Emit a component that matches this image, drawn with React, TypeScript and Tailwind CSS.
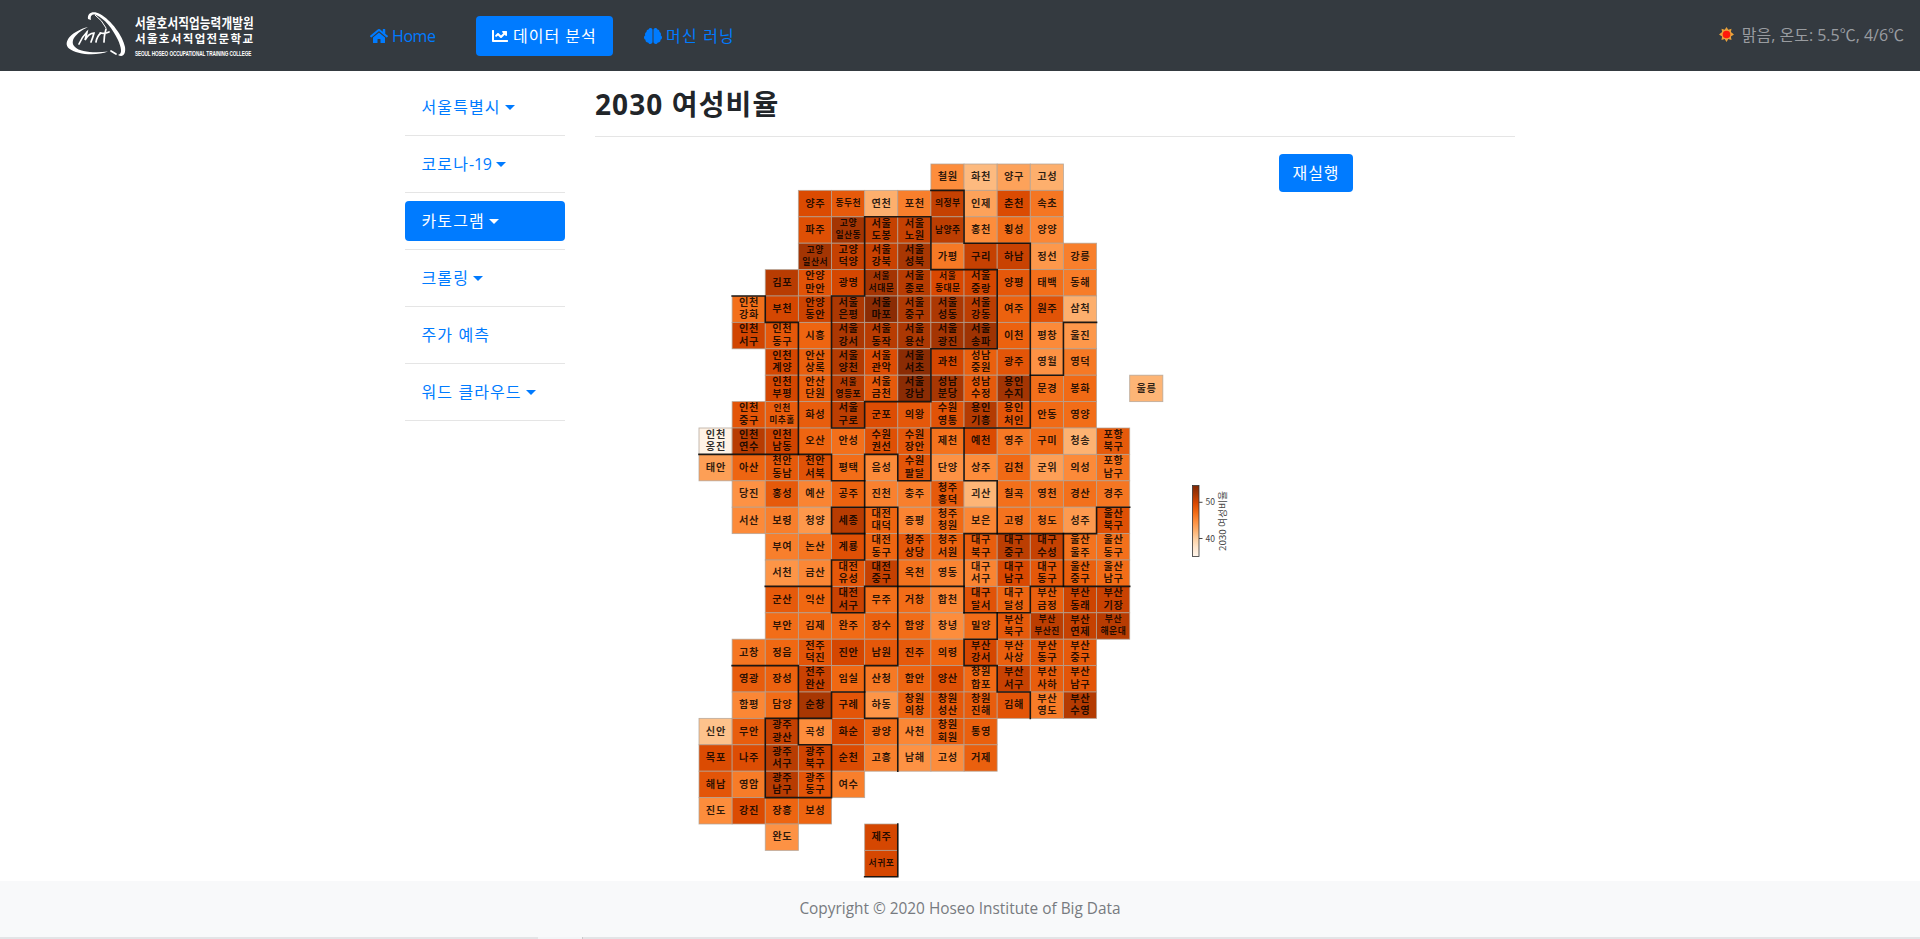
import React from "react";
import { FaHome, FaChartLine, FaBrain } from "react-icons/fa";

const CELL_W = 33.13;
const CELL_H = 26.4;

type Row = { y: number; x: number; cells: string };

// Each cell is "name:level"; a slash splits the name over two lines, "-" leaves a gap.
const ROWS: Row[] = [
  { y: 0, x: 7, cells: "철원:50 화천:33 양구:42 고성:37" },
  { y: 1, x: 3, cells: "양주:74 동두천:68 연천:37 포천:55 의정부:80 인제:42 춘천:74 속초:58" },
  { y: 2, x: 3, cells: "파주:72 고양/일산동:88 서울/도봉:80 서울/노원:80 남양주:82 홍천:50 횡성:61 양양:52" },
  { y: 3, x: 3, cells: "고양/일산서:88 고양/덕양:80 서울/강북:79 서울/성북:87 가평:57 구리:80 하남:79 정선:46 강릉:55" },
  { y: 4, x: 2, cells: "김포:83 안양/만안:71 광명:76 서울/서대문:88 서울/종로:83 서울/동대문:75 서울/중랑:76 양평:69 태백:60 동해:56" },
  { y: 5, x: 1, cells: "인천/강화:60 부천:76 안양/동안:78 서울/은평:86 서울/마포:96 서울/중구:85 서울/성동:86 서울/강동:82 여주:65 원주:71 삼척:37" },
  { y: 6, x: 1, cells: "인천/서구:77 인천/동구:69 시흥:64 서울/강서:86 서울/동작:83 서울/용산:86 서울/광진:88 서울/송파:90 이천:65 평창:51 울진:46" },
  { y: 7, x: 2, cells: "인천/계양:76 안산/상록:66 서울/양천:84 서울/관악:73 서울/서초:96 과천:76 성남/중원:66 광주:70 영월:48 영덕:57" },
  { y: 8, x: 2, cells: "인천/부평:76 안산/단원:66 서울/영등포:83 서울/금천:68 서울/강남:96 성남/분당:87 성남/수정:68 용인/수지:88 문경:60 봉화:62 - 울릉:35" },
  { y: 9, x: 1, cells: "인천/중구:70 인천/미추홀:67 화성:67 서울/구로:82 군포:73 의왕:69 수원/영통:71 용인/기흥:84 용인/처인:70 안동:62 영양:61" },
  { y: 10, x: 0, cells: "인천/옹진:2 인천/연수:83 인천/남동:77 오산:64 안성:60 수원/권선:72 수원/장안:69 제천:59 예천:74 영주:57 구미:62 청송:36 포항/북구:68" },
  { y: 11, x: 0, cells: "태안:43 아산:64 천안/동남:68 천안/서북:71 평택:61 음성:51 수원/팔달:70 단양:48 상주:50 김천:62 군위:43 의성:51 포항/남구:59" },
  { y: 12, x: 1, cells: "당진:48 홍성:68 예산:53 공주:65 진천:54 충주:55 청주/흥덕:68 괴산:35 칠곡:60 영천:57 경산:60 경주:58" },
  { y: 13, x: 1, cells: "서산:51 보령:55 청양:46 세종:83 대전/대덕:64 증평:53 청주/청원:62 보은:52 고령:59 청도:57 성주:45 울산/북구:72" },
  { y: 14, x: 2, cells: "부여:55 논산:58 계룡:72 대전/동구:64 청주/상당:69 청주/서원:65 대구/북구:67 대구/중구:82 대구/수성:80 울산/울주:59 울산/동구:60" },
  { y: 15, x: 2, cells: "서천:47 금산:52 대전/유성:69 대전/중구:80 옥천:59 영동:53 대구/서구:53 대구/남구:75 대구/동구:69 울산/중구:66 울산/남구:61" },
  { y: 16, x: 2, cells: "군산:68 익산:63 대전/서구:79 무주:60 거창:61 합천:52 대구/달서:71 대구/달성:64 부산/금정:66 부산/동래:78 부산/기장:79" },
  { y: 17, x: 2, cells: "부안:61 김제:61 완주:62 장수:65 함양:61 창녕:50 밀양:61 부산/북구:68 부산/부산진:82 부산/연제:80 부산/해운대:83" },
  { y: 18, x: 1, cells: "고창:58 정읍:63 전주/덕진:70 진안:76 남원:69 진주:68 의령:63 부산/강서:76 부산/사상:66 부산/동구:68 부산/중구:68" },
  { y: 19, x: 1, cells: "영광:67 장성:65 전주/완산:79 임실:63 산청:57 함안:64 양산:72 창원/합포:62 부산/서구:79 부산/사하:67 부산/남구:70" },
  { y: 20, x: 1, cells: "함평:52 담양:61 순창:87 구례:70 하동:47 창원/의창:64 창원/성산:68 창원/진해:67 김해:70 부산/영도:56 부산/수영:84" },
  { y: 21, x: 0, cells: "신안:30 무안:67 광주/광산:80 곡성:50 화순:75 광양:61 사천:52 창원/회원:67 통영:66" },
  { y: 22, x: 0, cells: "목포:74 나주:73 광주/서구:83 광주/북구:77 순천:74 고흥:55 남해:48 고성:50 거제:66" },
  { y: 23, x: 0, cells: "해남:70 영암:56 광주/남구:83 광주/동구:70 여수:55" },
  { y: 24, x: 0, cells: "진도:50 강진:74 장흥:64 보성:64" },
  { y: 25, x: 2, cells: "완도:48 - - 제주:76" },
  { y: 26, x: 5, cells: "서귀포:76" },
];

// Province boundaries as polylines in cell coordinates.
const BORDERS: number[][][] = [
  [[1, 5], [2, 5], [2, 6], [3, 6], [3, 11]],
  [[0, 11], [4, 11], [4, 12], [5, 12]],
  [[5, 2], [7, 2], [7, 4], [9, 4], [9, 7], [7, 7], [7, 9], [5, 9], [5, 10], [4, 10], [4, 5], [5, 5], [5, 2]],
  [[7, 1], [8, 1], [8, 3], [10, 3], [10, 10], [7, 10], [7, 12], [6, 12], [6, 11], [5, 11], [5, 15], [4, 15], [4, 17], [5, 17], [5, 16], [8, 16]],
  [[10, 8], [11, 8], [11, 6], [12, 6]],
  [[8, 10], [8, 12], [9, 12], [9, 14]],
  [[8, 17], [8, 14], [12, 14], [12, 13], [13, 13]],
  [[11, 14], [11, 16]],
  [[8, 17], [10, 17], [10, 16], [13, 16]],
  [[9, 17], [9, 18], [8, 18], [8, 19], [9, 19], [9, 20], [10, 20], [10, 21]],
  [[5, 14], [4, 14], [4, 13], [6, 13], [6, 19], [5, 19], [5, 21], [6, 21], [6, 23]],
  [[2, 16], [4, 16]],
  [[1, 19], [3, 19], [3, 21], [4, 21], [4, 20], [5, 20]],
  [[3, 21], [2, 21], [2, 24], [4, 24], [4, 22], [3, 22], [3, 21]],
  [[6, 25], [6, 27], [5, 27]],
];

const ORANGES = [
  [255, 245, 235],
  [254, 230, 206],
  [253, 208, 162],
  [253, 174, 107],
  [253, 141, 60],
  [241, 105, 19],
  [217, 72, 1],
  [166, 54, 3],
  [127, 39, 4],
];

function shade(level: number) {
  const t = (level / 100) * 8;
  const i = Math.min(7, Math.floor(t));
  const f = t - i;
  const c = ORANGES[i].map((v, k) => Math.round(v + (ORANGES[i + 1][k] - v) * f));
  return `rgb(${c.join(",")})`;
}

function Cell({ x, y, name, level }: { x: number; y: number; name: string; level: number }) {
  const lines = name.split("/");
  const small = lines.some((l) => l.length > 2);
  const cx = (x + 0.5) * CELL_W;
  const cy = (y + 0.5) * CELL_H;
  const size = small ? 8.8 : 10.2;
  return (
    <g>
      <rect
        x={x * CELL_W}
        y={y * CELL_H}
        width={CELL_W}
        height={CELL_H}
        fill={shade(level)}
        stroke="#b0a396"
        strokeWidth={0.9}
        strokeOpacity={0.8}
      />
      {lines.map((l, i) => (
        <text
          key={i}
          x={cx}
          y={cy + (lines.length === 1 ? -0.6 : i === 0 ? -7.1 : 5.2) + size * 0.37}
          fontSize={size}
          textLength={small ? l.length * 8.4 : l.length * 9.7}
          textAnchor="middle"
          fill="#000"
          fillOpacity={0.82}
          className="font-bold"
        >
          {l}
        </text>
      ))}
    </g>
  );
}

function Cartogram() {
  return (
    <svg width="560" height="724" viewBox="-4 -6 560 724" className="block shrink-0 font-['Noto_Sans_CJK_KR',sans-serif]">
      {ROWS.map((row) =>
        row.cells.split(" ").map((c, i) => {
          if (c === "-") return null;
          const [name, level] = c.split(":");
          return <Cell key={`${row.y}-${i}`} x={row.x + i} y={row.y} name={name} level={Number(level)} />;
        })
      )}
      {BORDERS.map((b, i) => (
        <polyline
          key={i}
          points={b.map(([x, y]) => `${x * CELL_W},${y * CELL_H}`).join(" ")}
          fill="none"
          stroke="#000"
          strokeOpacity={0.85}
          strokeWidth={1.6}
          strokeLinecap="square"
        />
      ))}
      <defs>
        <linearGradient id="scale" x1="0" y1="1" x2="0" y2="0">
          {ORANGES.map((_, i) => (
            <stop key={i} offset={i / 8} stopColor={shade(i * 12.5)} />
          ))}
        </linearGradient>
      </defs>
      <rect x="493.5" y="321.5" width="6.5" height="71" fill="url(#scale)" stroke="#333" strokeWidth="0.8" />
      <path d="M500 338.3h3.5M500 374.5h3.5" stroke="#333" strokeWidth="0.9" />
      <g fill="#444" fontSize="9">
        <text x="506.5" y="341.4" textLength="9.5" lengthAdjust="spacingAndGlyphs">50</text>
        <text x="506.5" y="377.6" textLength="9.5" lengthAdjust="spacingAndGlyphs">40</text>
        <text transform="translate(526.5 387) rotate(-90)" textLength="60" lengthAdjust="spacingAndGlyphs">2030 여성비율</text>
      </g>
    </svg>
  );
}

function Logo() {
  return (
    <svg width="192" height="50" viewBox="0 0 192 50" className="block overflow-visible" fill="#fff">
      <path d="M22 8C21 2 27 -1 34 3C45 9 57 25 59 36C60 43 57 47 52 44C57 43 55 36 52 29C47 18 38 7 30 4C26 2.500 24 5 25 9Z" />
      <path d="M22 16C6 20 -4 31 3 37.500C11 44 31 45 42 40.500C30 42 14 41.500 9 36C3 30 10 22 22 16Z" />
      <path d="M29 4Q36 9 40 17" stroke="#fff" strokeWidth="1" fill="none" />
      <path d="M13 33Q16 26 21 21Q20 26 19 29Q23 22 28 22Q27 26 25 31M30 31Q31 25 35 22M38 31Q38 25 40 18M34 22Q39 23 43 21M45 40L50 43" stroke="#fff" strokeWidth="1.700" fill="none" strokeLinecap="round" />
      <g className="font-['Noto_Sans_CJK_KR',sans-serif] font-bold">
        <g transform="translate(69 17.300) scale(0.86 1)">
          <text fontSize="13.500" textLength="138">서울호서직업능력개발원</text>
        </g>
        <g transform="translate(69 32)">
          <text fontSize="11.500" textLength="118">서울호서직업전문학교</text>
        </g>
      </g>
      <g transform="translate(69 44.500) scale(0.64 1)">
        <text fontSize="7.300" textLength="182" className="font-['Liberation_Sans',sans-serif] font-bold">
          SEOUL HOSEO OCCUPATIONAL TRAINING COLLEGE
        </text>
      </g>
    </svg>
  );
}

function Sun() {
  return (
    <svg width="15" height="15" viewBox="0 0 15 15">
      <path d="M7.500 0l1.800 2.800 3.200-1-.6 3.300 3.100 2.400-3.100 2.100.6 3.400-3.200-.9-1.800 2.900-1.800-2.900-3.200.9.6-3.400L0 7.500l3.100-2.400-.6-3.300 3.200 1z" fill="#e9a13b" />
      <circle cx="7.500" cy="7.500" r="3.800" fill="#ff1a0a" />
    </svg>
  );
}

const MENU = [
  { label: "서울특별시", caret: true },
  { label: "코로나", suffix: "-19", caret: true },
  { label: "카토그램", caret: true, active: true },
  { label: "크롤링", caret: true },
  { label: "주가 예측" },
  { label: "워드 클라우드", caret: true },
];

function Sidebar() {
  return (
    <nav className="w-40 shrink-0">
      {MENU.map((m) => (
        <div key={m.label} className="mb-2 border-b border-[#e5e5e5] pb-2">
          <a className={`flex h-10 items-center rounded pr-4 pl-[16.5px] tracking-[1.1px] ${m.active ? "bg-[#007bff] text-white" : "text-[#007bff]"}`}>
            {m.label}
            {m.suffix && <span className="tracking-[-0.2px]">{m.suffix}</span>}
            {m.caret && <span className="ml-1 border-x-[5px] border-t-[5px] border-x-transparent border-t-current" />}
          </a>
        </div>
      ))}
    </nav>
  );
}

export default function App() {
  return (
    <div className="flex h-[939px] flex-col overflow-hidden bg-white font-['Open_Sans','Noto_Sans_CJK_KR',sans-serif] text-base leading-6 text-[#212529]">
      <header className="flex h-[71px] shrink-0 items-center bg-[#343a40] pr-4 pl-[66px]">
        <Logo />
        <nav className="ml-24 flex items-center text-[#007bff]">
          <a className="flex h-10 w-[122px] items-center gap-1 pl-4">
            <FaHome size={18} />
            <span className="tracking-[-0.4px]">Home</span>
          </a>
          <a className="flex h-10 w-[137px] items-center gap-[5px] rounded bg-[#007bff] pl-4 text-white">
            <FaChartLine size={16} />
            <span className="tracking-[1px] whitespace-nowrap">데이터 분석</span>
          </a>
          <a className="flex h-10 items-center gap-1 pl-[31px]">
            <FaBrain size={18} />
            <span className="tracking-[1.2px]">머신 러닝</span>
          </a>
        </nav>
        <div className="mb-0.5 ml-auto flex items-center gap-2 text-[#999ca0]">
          <Sun />
          <span className="tracking-[-0.02px]">맑음, 온도: 5.5℃, 4/6℃</span>
        </div>
      </header>

      <div className="flex h-[810px] shrink-0 pt-4 pl-[405px]">
        <Sidebar />
        <main className="ml-[30px] w-[920px]">
          <h3 className="flex h-[50px] items-start border-b border-[#e5e5e5] text-[28px] leading-[34px] font-bold tracking-[1.1px]">2030 여성비율</h3>
          <div className="flex pt-[21px] pl-[100px]">
            <Cartogram />
            <button className="-mt-1 ml-6 h-[38px] w-[74px] rounded bg-[#007bff] text-base tracking-[0.9px] text-white">재실행</button>
          </div>
        </main>
      </div>

      <footer className="flex h-14 shrink-0 items-center justify-center bg-[#f8f9fa] text-[15.400px] text-[#777b80]">
        Copyright © 2020 Hoseo Institute of Big Data
      </footer>
      <div className="flex h-0.5 shrink-0 bg-[#e3e4e6] pl-[538px]">
        <div className="w-[45px] border-r border-[#c8c9cb] bg-[#f3f4f6]" />
      </div>
    </div>
  );
}
